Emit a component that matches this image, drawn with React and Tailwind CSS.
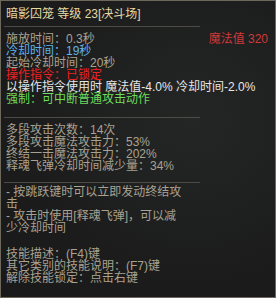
import React from "react";

const font = { fontFamily: '"Liberation Sans", "Noto Sans CJK SC", sans-serif' };

function Line({ children, className = "" }) {
  return (
    <div className={`h-[12px] text-[12px] leading-[12px] whitespace-nowrap ${className}`}>
      {children}
    </div>
  );
}

function Sep({ className = "" }) {
  return <div className={`h-px w-[196px] bg-[#4e4b46] ${className}`} />;
}

export default function App() {
  return (
    <div
      style={font}
      className="w-[276px] h-[298px] overflow-hidden border border-[#6d685c] bg-[radial-gradient(ellipse_at_70%_40%,#242626_0%,#1c1c1c_60%,#191919_100%)] text-[#a9a291]"
    >
      <div className="flex flex-col pl-[5px] pr-[7px] pt-[6px]">
        {/* title */}
        <div className="h-[14px] text-[12px] leading-[14px] text-[#e4d9a4] whitespace-nowrap">
          暗影囚笼 等级 23[决斗场]
        </div>
        <Sep className="mt-[5px] -ml-[2px]" />

        {/* base info */}
        <div className="mt-[6px] flex flex-col">
          <div className="flex justify-between">
            <Line>施放时间：0.3秒</Line>
            <Line className="text-[#cf3a3a]">魔法值 320</Line>
          </div>
          <Line className="text-[#5fb4ee]">冷却时间：19秒</Line>
          <Line>起始冷却时间：20秒</Line>
          <Line className="text-[#ee2222]">操作指令：已锁定</Line>
          <Line className="text-[#e6e6e6]">以操作指令使用时 魔法值-4.0% 冷却时间-2.0%</Line>
          <Line className="text-[#6fdc5a]">强制：可中断普通攻击动作</Line>
        </div>
        <Sep className="mt-[12px] -ml-[2px]" />

        {/* stats */}
        <div className="mt-[6px] flex flex-col">
          <Line>多段攻击次数：14次</Line>
          <Line>多段攻击魔法攻击力：53%</Line>
          <Line>终结一击魔法攻击力：202%</Line>
          <Line>释魂飞弹冷却时间减少量：34%</Line>
        </div>
        <Sep className="mt-[10px] -ml-[2px]" />

        {/* notes */}
        <div className="mt-[3px] flex flex-col">
          <Line>- 按跳跃键时可以立即发动终结攻</Line>
          <Line>击</Line>
          <Line>- 攻击时使用[释魂飞弹]，可以减</Line>
          <Line>少冷却时间</Line>
        </div>

        {/* keys */}
        <div className="mt-[14px] flex flex-col">
          <Line>技能描述：(F4)键</Line>
          <Line>其它类别的技能说明：(F7)键</Line>
          <Line>解除技能锁定：点击右键</Line>
        </div>
      </div>
    </div>
  );
}
